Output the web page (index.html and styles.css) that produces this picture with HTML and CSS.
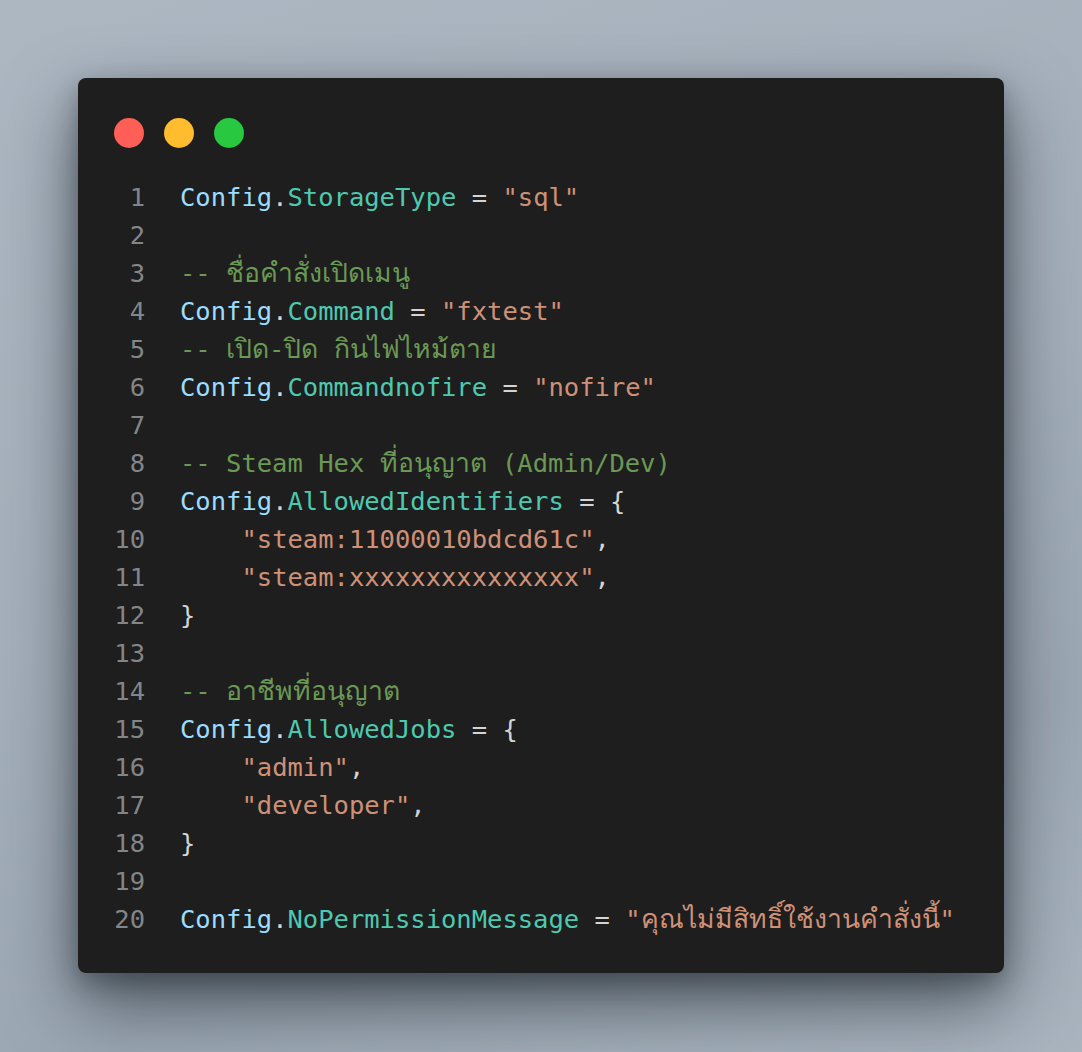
FILE: index.html
```html
<!DOCTYPE html>
<html lang="th">
<head>
<meta charset="utf-8">
<title>Config</title>
<link rel="stylesheet" href="styles.css">
</head>
<body>
<div class="stage">
  <div class="window">
    <div class="dots">
      <span class="dot red"></span>
      <span class="dot yellow"></span>
      <span class="dot green"></span>
    </div>
    <div class="code">
      <div class="line"><span class="ln">1</span><span class="src"><span class="v">Config</span><span class="p">.</span><span class="k">StorageType</span><span class="p"> = </span><span class="s">"sql"</span></span></div>
      <div class="line"><span class="ln">2</span><span class="src"></span></div>
      <div class="line"><span class="ln">3</span><span class="src"><span class="c">-- <span class="th">ชื่อคำสั่งเปิดเมนู</span></span></span></div>
      <div class="line"><span class="ln">4</span><span class="src"><span class="v">Config</span><span class="p">.</span><span class="k">Command</span><span class="p"> = </span><span class="s">"fxtest"</span></span></div>
      <div class="line"><span class="ln">5</span><span class="src"><span class="c">-- <span class="th">เปิด</span>-<span class="th">ปิด กินไฟไหม้ตาย</span></span></span></div>
      <div class="line"><span class="ln">6</span><span class="src"><span class="v">Config</span><span class="p">.</span><span class="k">Commandnofire</span><span class="p"> = </span><span class="s">"nofire"</span></span></div>
      <div class="line"><span class="ln">7</span><span class="src"></span></div>
      <div class="line"><span class="ln">8</span><span class="src"><span class="c">-- Steam Hex <span class="th">ที่อนุญาต</span> (Admin/Dev)</span></span></div>
      <div class="line"><span class="ln">9</span><span class="src"><span class="v">Config</span><span class="p">.</span><span class="k">AllowedIdentifiers</span><span class="p"> = {</span></span></div>
      <div class="line"><span class="ln">10</span><span class="src"><span class="p">    </span><span class="s">"steam:11000010bdcd61c"</span><span class="p">,</span></span></div>
      <div class="line"><span class="ln">11</span><span class="src"><span class="p">    </span><span class="s">"steam:xxxxxxxxxxxxxxx"</span><span class="p">,</span></span></div>
      <div class="line"><span class="ln">12</span><span class="src"><span class="p">}</span></span></div>
      <div class="line"><span class="ln">13</span><span class="src"></span></div>
      <div class="line"><span class="ln">14</span><span class="src"><span class="c">-- <span class="th">อาชีพที่อนุญาต</span></span></span></div>
      <div class="line"><span class="ln">15</span><span class="src"><span class="v">Config</span><span class="p">.</span><span class="k">AllowedJobs</span><span class="p"> = {</span></span></div>
      <div class="line"><span class="ln">16</span><span class="src"><span class="p">    </span><span class="s">"admin"</span><span class="p">,</span></span></div>
      <div class="line"><span class="ln">17</span><span class="src"><span class="p">    </span><span class="s">"developer"</span><span class="p">,</span></span></div>
      <div class="line"><span class="ln">18</span><span class="src"><span class="p">}</span></span></div>
      <div class="line"><span class="ln">19</span><span class="src"></span></div>
      <div class="line"><span class="ln">20</span><span class="src"><span class="v">Config</span><span class="p">.</span><span class="k">NoPermissionMessage</span><span class="p"> = </span><span class="s">"<span class="th">คุณไม่มีสิทธิ์ใช้งานคำสั่งนี้</span>"</span></span></div>
    </div>
  </div>
</div>
</body>
</html>
```

FILE: styles.css
```css
* { box-sizing: border-box; }

html, body {
  margin: 0;
  padding: 0;
  height: 100%;
}

body {
  background: linear-gradient(160deg, #acb7c2 0%, #a4afbb 45%, #9ba7b3 75%, #a9b4bf 100%);
  overflow: hidden;
}

.stage {
  padding: 78px 78px 0 78px;
}

.window {
  width: 926px;
  height: 895px;
  background: #1e1e1e;
  border-radius: 8px;
  padding: 40px 36px 35px 36px;
  box-shadow: 0 30px 70px rgba(20, 26, 34, 0.6), 0 10px 24px rgba(20, 26, 34, 0.3);
}

.dots {
  display: flex;
  gap: 20px;
  height: 30px;
  margin-bottom: 30px;
}

.dot {
  width: 30px;
  height: 30px;
  border-radius: 50%;
  display: block;
}

.red { background: #ff5f57; }
.yellow { background: #febc2e; }
.green { background: #28c840; }

.code {
  font-family: "DejaVu Sans Mono", "Liberation Mono", monospace;
  font-size: 25.5px;
  line-height: 38px;
}

.line {
  display: flex;
  height: 38px;
  white-space: pre;
}

.ln {
  width: 31px;
  margin-right: 35px;
  text-align: right;
  color: #838689;
  flex: none;
}

.src {
  color: #d4d4d4;
}

.th {
  font-size: 26.6px;
}

.v { color: #9cdcfe; }
.k { color: #4ec9b0; }
.s { color: #ce9178; }
.c { color: #6a9955; }
.p { color: #d4d4d4; }
```
